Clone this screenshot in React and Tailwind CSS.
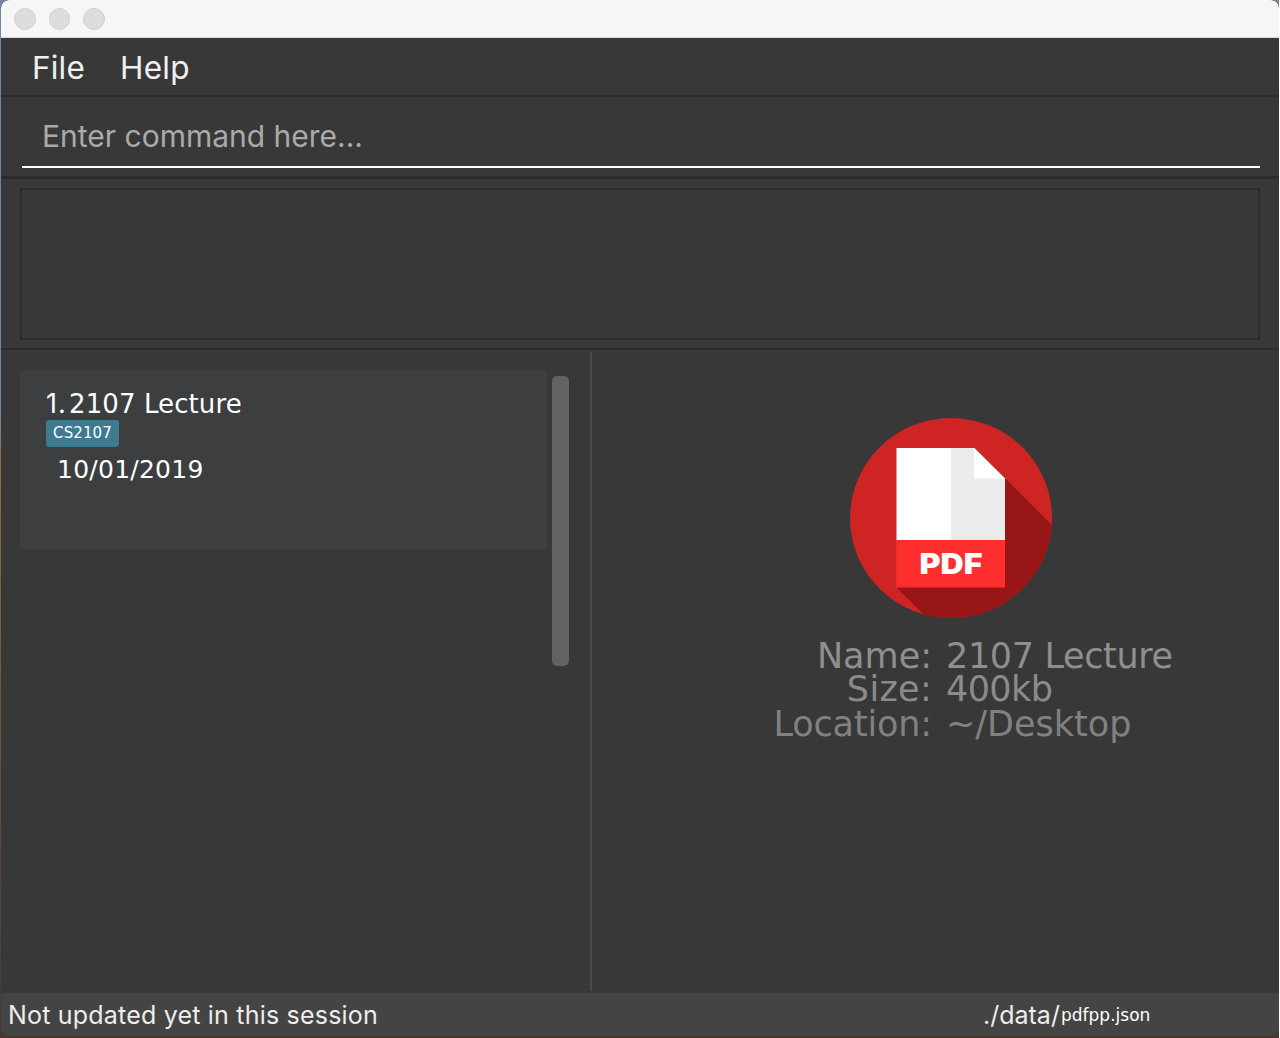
import React from "react";

function TitleBar() {
  return (
    <div className="flex h-[38px] shrink-0 items-center gap-[13px] rounded-t-[8px] border-b border-[#dcdcdc] bg-[#f6f6f6] pl-[13px] pt-px">
      {[0, 1, 2].map((i) => (
        <span key={i} className="size-[21.5px] rounded-full border border-[#cfcfcf] bg-[#dddddd]" />
      ))}
    </div>
  );
}

function PdfIcon() {
  return (
    <svg className="ml-[257px] block h-[202px] w-[204px]" viewBox="0 0 204 202">
      <defs>
        <clipPath id="disc">
          <ellipse cx="102" cy="101" rx="101" ry="100" />
        </clipPath>
      </defs>
      <ellipse cx="102" cy="101" rx="101" ry="100" fill="#cf2424" />
      <path clipPath="url(#disc)" d="M156 61 L204 109 V202 H79 L48 171 Z" fill="#981616" />
      <path d="M47.500 31 H102 V124 H47.500 Z" fill="#ffffff" />
      <path d="M102 31 H125.500 L156 61.500 V124 H102 Z" fill="#ecebec" />
      <path d="M125 31 L156 61.500 H125 Z" fill="#ffffff" />
      <rect x="47.500" y="123" width="108.500" height="47.500" fill="#ff2e2e" />
      <text x="70.500" y="157" textLength="63" lengthAdjust="spacingAndGlyphs" fontSize="28.500" fontWeight="900" fill="#ffffff" className="font-['Inter',sans-serif]">
        PDF
      </text>
    </svg>
  );
}

function Detail({ label, value, labelClass, valueClass, rowClass }) {
  return (
    <div className={"flex whitespace-pre text-[35px] " + rowClass}>
      <span className="flex w-[340px] justify-end">
        <span className={labelClass}>{label}</span>
      </span>
      <span className={"ml-[14px] " + valueClass}>{value}</span>
    </div>
  );
}

export default function App() {
  return (
    <div className="h-[1038px] w-[1280px] overflow-hidden border-r border-white bg-linear-to-b from-[#6f86a3] from-40% via-[#8a6f4c] via-44% to-[#49372f] pl-px">
      <div className="flex h-[1036px] flex-col overflow-hidden rounded-[8px] bg-[#383838] font-['Inter',sans-serif]">
        <TitleBar />
        <div className="flex h-[59px] shrink-0 items-center border-b-2 border-[#2c2c2c] pl-[31px] pt-[2px] text-[31.5px] text-[#f0f0f0]">
          <span className="w-[88px] tracking-[0.2px]">File</span>
          <span className="tracking-[0.3px]">Help</span>
        </div>
        <div className="h-[82px] shrink-0 border-b-[3px] border-[#2b2b2b] pl-[21px] pr-[19px]">
          <div className="flex h-[71px] items-center border-b-2 border-white pl-[20px] pt-[9px] text-[30px] text-[#aaaaaa]">
            <span className="whitespace-nowrap tracking-[0px]">Enter command here...</span>
          </div>
        </div>
        <div className="h-[171px] shrink-0 border-b-2 border-[#2b2b2b] px-[19px] pt-[9px]">
          <div className="h-[152px] border-2 border-[#2d2d2d]" />
        </div>
        <div className="flex min-h-0 flex-1 pt-[2px] pb-[2px]">
          <div className="flex w-[591px] shrink-0 border-r-2 border-[#4b4b4b] pl-[19px] pt-[18px]">
            <div className="h-[179px] w-[527px] bg-[#3c3e3f] pl-[26px] pt-[17px] font-['DejaVu_Sans',sans-serif] text-white">
              <div className="flex h-[33px] items-center whitespace-nowrap pt-[2px] text-[26px]">
                <span className="w-[23px] font-['Inter',sans-serif] text-[27px] tracking-[1px]">1.</span>
                <span className="tracking-[0.1px]">2107 Lecture</span>
              </div>
              <div className="flex h-[27px] w-[73px] items-center justify-center rounded-[3px] bg-[#3e7b91] text-[15px] tracking-[0.1px]">
                <span>CS2107</span>
              </div>
              <div className="flex h-[45px] items-center pl-[11px] pt-px text-[25px] tracking-[0.25px]">
                <span>10/01/2019</span>
              </div>
            </div>
            <div className="ml-[5px] mt-[6px] h-[290px] w-[17px] rounded-[5px] bg-[#626262]" />
          </div>
          <div className="flex-1 pt-[65px] font-['DejaVu_Sans',sans-serif]">
            <PdfIcon />
            <div className="pt-[21px]">
              <Detail label="Name:" value="2107 Lecture" rowClass="h-[33px] leading-[33px] text-[#8f8f8f]" labelClass="" valueClass="tracking-[-0.35px]" />
              <Detail label="Size:" value="400kb" rowClass="h-[34px] leading-[33px] text-[#8b8b8b]" labelClass="tracking-[0.3px]" valueClass="tracking-[-0.6px]" />
              <Detail label="Location:" value="~/Desktop" rowClass="h-[35px] leading-[35px] text-[#818181]" labelClass="tracking-[-0.15px]" valueClass="" />
            </div>
          </div>
        </div>
        <div className="flex h-[43px] shrink-0 items-center whitespace-nowrap bg-[#444444] pl-[7px] pt-[2px] text-[25px] text-[#ededed]">
          <span className="w-[975px] tracking-[0.2px]">Not updated yet in this session</span>
          <span className="w-[78px]">./data/</span>
          <span className="font-['DejaVu_Sans',sans-serif] text-[17px] text-white">pdfpp.json</span>
        </div>
      </div>
    </div>
  );
}
